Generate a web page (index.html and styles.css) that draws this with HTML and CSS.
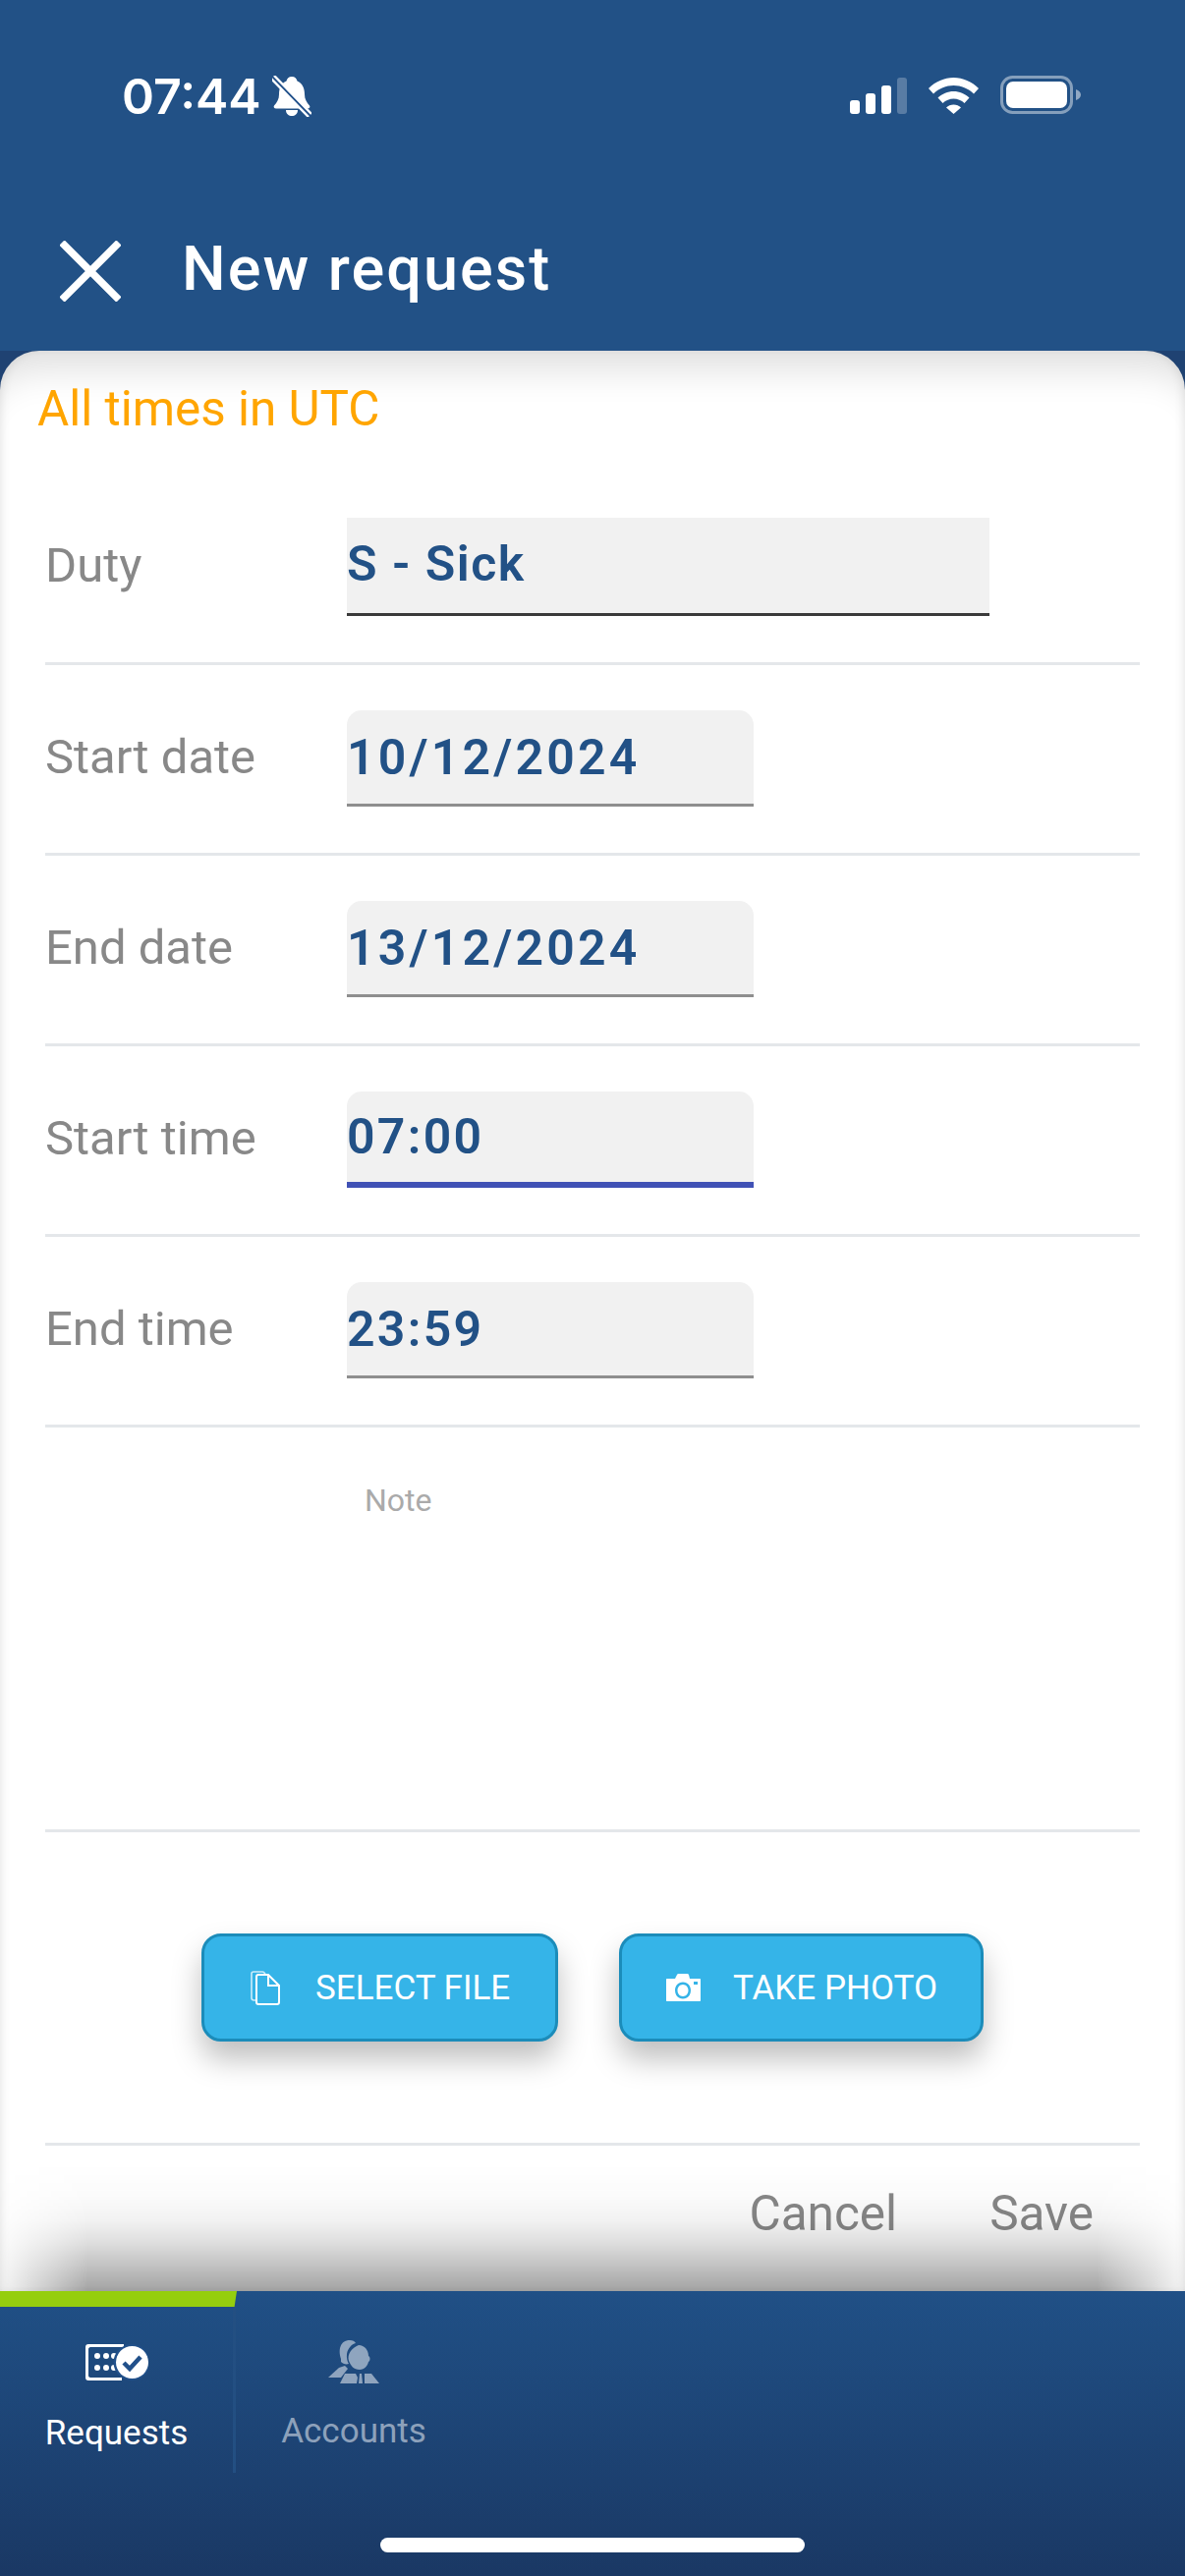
FILE: index.html
```html
<!DOCTYPE html>
<html lang="en">
<head>
<meta charset="utf-8">
<title>New request</title>
<link rel="stylesheet" href="styles.css">
</head>
<body>
<div class="app">
  <header class="top">
    <div class="status">
      <div class="status-left">
        <span class="clock">07:44</span>
        <svg class="bell" viewBox="0 0 40 42"><path fill="#fff" d="M20 1c3 0 5 2 5.500 4.500C31 8 33 13 33 19c0 5 2 8 5 11.500 1 1.500 0 3-2 3H4c-2 0-3-1.500-2-3C5 27 7 24 7 19 7 13 9 8 14.500 5.500 15 3 17 1 20 1z"/><path fill="#fff" d="M14 35h12c0 4-3 6-6 6s-6-2-6-6z"/><path stroke="#21508a" stroke-width="5" d="M0 1l40 41"/><path stroke="#fff" stroke-width="2.500" d="M2 0l38 39M-1 3l38 39"/></svg>
      </div>
      <div class="status-right">
        <svg class="signal" viewBox="0 0 58 37"><rect y="23" width="10" height="14" rx="3" fill="#fff"/><rect x="16" y="16" width="10" height="21" rx="3" fill="#fff"/><rect x="32" y="8" width="10" height="29" rx="3" fill="#fff"/><rect x="48" width="10" height="37" rx="3" fill="#fff" opacity=".25"/></svg>
        <svg class="wifi" viewBox="0 0 51 37"><path fill="#fff" d="M25.500 0C35 0 44 4 51 11l-5 5.500C40.500 11 33 8 25.500 8S10.500 11 5 16.500L0 11C7 4 16 0 25.500 0z"/><path fill="#fff" d="M25.500 14c6 0 11.500 2.500 16 6.500l-5 5.500c-3-3-7-4.500-11-4.500s-8 1.500-11 4.500l-5-5.500c4.500-4 10-6.500 16-6.500z"/><path fill="#fff" d="M25.500 27.500c3 0 5.500 1 7.500 3L25.500 37 18 30.500c2-2 4.500-3 7.500-3z"/></svg>
        <svg class="battery" viewBox="0 0 82 39"><rect x="1.500" y="1.500" width="71" height="36" rx="11" fill="none" stroke="#fff" stroke-opacity=".45" stroke-width="3"/><rect x="6" y="6" width="62" height="27" rx="7" fill="#fff"/><path d="M77 14c3 1 5 3 5 5.500S80 24 77 25z" fill="#fff" fill-opacity=".5"/></svg>
      </div>
    </div>
    <div class="titlebar">
      <svg class="close" viewBox="0 0 62 62"><path d="M2 2l58 58M60 2L2 60" stroke="#fff" stroke-width="7.500" fill="none"/></svg>
      <h1 class="title">New request</h1>
    </div>
  </header>

  <main class="sheet">
    <p class="notice">All times in UTC</p>
    <div class="row row-duty">
      <span class="label">Duty</span>
      <div class="field field-wide"><span class="value value-duty">S - Sick</span></div>
    </div>
    <div class="row">
      <span class="label">Start date</span>
      <div class="field"><span class="value value-date">10/12/2024</span></div>
    </div>
    <div class="row">
      <span class="label">End date</span>
      <div class="field"><span class="value value-date">13/12/2024</span></div>
    </div>
    <div class="row">
      <span class="label">Start time</span>
      <div class="field field-active"><span class="value">07:00</span></div>
    </div>
    <div class="row">
      <span class="label">End time</span>
      <div class="field"><span class="value">23:59</span></div>
    </div>
    <div class="row-note"><span class="note-label">Note</span></div>
    <div class="row-buttons">
      <button class="btn btn-file">
        <svg class="btn-icon" viewBox="0 0 30 35"><path d="M6 30H3.500C2 30 1 29 1 27.500V3C1 2 2 1 3 1h9c1.500 0 2.500.8 3 3" fill="none" stroke="#fff" stroke-width="1.600" opacity=".75"/><path d="M6 6c0-1 1-2 2-2h10l11 11v17c0 1.500-1 2-2 2H8c-1 0-2-.5-2-2z" fill="none" stroke="#fff" stroke-width="2"/><path d="M18 4v11h11" fill="none" stroke="#fff" stroke-width="2"/></svg>
        <span>SELECT FILE</span>
      </button>
      <button class="btn btn-photo">
        <svg class="btn-icon" viewBox="0 0 35 28"><path fill="#fff" fill-rule="evenodd" d="M1 5h8l2-4c.3-.6.8-1 1.500-1h9c.7 0 1.200.4 1.500 1l1 4h10c.6 0 1 .4 1 1v21c0 .6-.4 1-1 1H1c-.6 0-1-.4-1-1V6c0-.6.4-1 1-1zm16 3.500c-5 0-8 4-8 8.500s3 8.500 8 8.500 8-4 8-8.500-3-8.500-8-8.500zm0 2.500c3.300 0 5.500 2.800 5.500 6s-2.200 6-5.500 6-5.500-2.800-5.500-6 2.200-6 5.500-6zM28 8v3h4V8z"/></svg>
        <span>TAKE PHOTO</span>
      </button>
    </div>
    <div class="actions">
      <span class="action">Cancel</span>
      <span class="action">Save</span>
    </div>
  </main>

  <nav class="tabs">
    <div class="tab tab-active">
      <svg class="tab-icon-req" viewBox="0 0 64 37"><path fill="#fff" d="M3 0h36v3H5c-1 0-2 1-2 2v27c0 1 1 2 2 2h32v3H3c-2 0-3-1-3-3V3c0-2 1-3 3-3z"/><g fill="#fff"><circle cx="12" cy="12" r="3"/><circle cx="21" cy="12" r="3"/><circle cx="29" cy="12" r="3"/><circle cx="12" cy="24" r="3"/><circle cx="21" cy="24" r="3"/><circle cx="29" cy="24" r="3"/></g><circle cx="47" cy="18.500" r="18.500" fill="#21508a"/><circle cx="47.500" cy="18.500" r="16.500" fill="#fff"/><path d="M39 19l6 6 11-12" fill="none" stroke="#21508a" stroke-width="4.500"/></svg>
      <span class="tab-label">Requests</span>
    </div>
    <div class="tab tab-muted">
      <svg class="tab-icon-acc" viewBox="0 0 52 44"><g fill="#fff" fill-opacity=".5"><path d="M13 19C10 10 12 0 22 0c3 0 5 1 6 3-4 1-8 5-9 11-.5 4 .5 8 2 10-3 1-6 0-8-2z"/><path d="M11 28l6-2 3 3-7 9H0z"/><path d="M31 5c6 0 10 5 10 11 2 1 2 5 0 6-1 4-4 8-9 8-6 0-9-4-11-9-2-7 3-13 10-16z"/><path d="M12 44l5-10h11l2 4-1 6z"/><path d="M31 44l1-10h2l1 10z"/><path d="M37 34h7l8 10H37z"/></g></svg>
      <span class="tab-label">Accounts</span>
    </div>
    <div class="home-indicator"></div>
  </nav>
</div>
</body>
</html>
```
FILE: styles.css
```css
* { box-sizing: border-box; }
html, body { margin: 0; padding: 0; }
body { font-family: Roboto, "Liberation Sans", sans-serif; background: #1f4272; }
.app { width: 1206px; height: 2622px; display: flex; flex-direction: column; overflow: hidden; background: #1f4272; }

.top { height: 357px; flex: none; background: #225186; display: flex; flex-direction: column; }
.status { height: 195px; flex: none; padding: 77px 106px 0 124px; display: flex; justify-content: space-between; align-items: flex-start; }
.status-left { display: flex; align-items: center; gap: 11px; }
.clock { font-family: Inter, Roboto, sans-serif; font-weight: 600; font-size: 50px; line-height: 41px; color: #fff; }
.bell { width: 40px; height: 42px; }
.status-right { display: flex; align-items: center; }
.signal { width: 58px; height: 37px; margin-top: 2px; }
.wifi { width: 51px; height: 37px; margin: 2px 0 0 22px; }
.battery { width: 82px; height: 39px; margin-left: 22px; }

.titlebar { display: flex; align-items: center; padding: 0 0 0 61px; height: 162px; }
.close { width: 62px; height: 62px; flex: none; }
.title { margin: 0 0 6px 62px; font-size: 63px; font-weight: 500; letter-spacing: 2px; color: #fff; }

.sheet { flex: 1; min-height: 0; background: #fff; border-radius: 40px 40px 0 0; display: flex; flex-direction: column; position: relative;
  box-shadow: inset 0 50px 36px -30px rgba(0,0,0,.12), inset 6px 0 12px -6px rgba(0,0,0,.12), inset -6px 0 12px -6px rgba(0,0,0,.12); }
.sheet::after { content: ""; position: absolute; left: 0; right: 0; bottom: 0; height: 130px; pointer-events: none;
  background: linear-gradient(rgba(0,0,0,0), rgba(0,0,0,.015) 25%, rgba(0,0,0,.05) 45%, rgba(0,0,0,.13) 62%, rgba(0,0,0,.25) 82%, rgba(0,0,0,.36));
  -webkit-mask-image: linear-gradient(90deg, rgba(0,0,0,.1), #000 90px, #000 1116px, rgba(0,0,0,.1));
  mask-image: linear-gradient(90deg, rgba(0,0,0,.1), #000 90px, #000 1116px, rgba(0,0,0,.1)); }
.notice { margin: 0; height: 126px; padding: 29px 0 0 38px; font-size: 49.400px; line-height: 60px; color: #ffa500; }

.row { height: 194px; margin: 0 46px; flex: none; display: flex; align-items: center; border-bottom: 3px solid #e4e7ea; padding-bottom: 1px; }
.row-duty { padding-bottom: 3px; }
.label { width: 307px; flex: none; font-size: 49px; color: #888; padding-bottom: 3px; }
.field { width: 414px; height: 98px; background: #f1f1f1; border-radius: 15px 15px 0 0; border-bottom: 3px solid #8e8e8e; display: flex; align-items: center; }
.field-wide { width: 654px; height: 100px; border-radius: 0; border-bottom-color: #3a3a3a; }
.field-active { border-bottom: 6px solid #4051b5; }
.value { font-size: 50px; font-weight: 600; letter-spacing: 2.300px; color: #225186; line-height: 1; }
.value-date { letter-spacing: 3.200px; }
.value-duty { letter-spacing: 1.500px; margin-bottom: 3px; }

.row-note { height: 412px; margin: 0 46px; flex: none; padding: 55px 0 0 325px; border-bottom: 3px solid #e4e7ea; }
.note-label { font-size: 32px; line-height: 38px; color: #aaa; display: block; }

.row-buttons { height: 319px; margin: 0 46px; flex: none; display: flex; justify-content: center; align-items: center; gap: 62px; border-bottom: 3px solid #e4e7ea; }
.btn { height: 110px; padding: 0; background: #35b4e8; border: 3px solid #1b8cba; border-radius: 20px; color: #fff; font-family: Roboto, sans-serif; font-size: 35px; display: flex; align-items: center; box-shadow: 0 18px 30px rgba(0,0,0,.25); }
.btn-file { width: 363px; padding-left: 47px; gap: 36px; }
.btn-photo { width: 371px; padding-left: 45px; gap: 33px; }
.btn-file .btn-icon { width: 30px; height: 35px; }
.btn-photo .btn-icon { width: 35px; height: 28px; }

.actions { flex: 1; display: flex; justify-content: flex-end; gap: 94px; padding: 39px 93px 0 0; }
.action { font-size: 49.500px; line-height: 60px; color: #888; }

.tabs { height: 290px; flex: none; background: linear-gradient(#205086, #1a3864); display: flex; align-items: flex-start; position: relative; }
.tab { width: 240px; height: 185px; display: flex; flex-direction: column; align-items: center; }
.tab-active { position: relative; border-right: 3px solid #234f82; }
.tab-active::before { content: ""; position: absolute; left: 0; top: 0; width: 241px; height: 16px; background: #95ce0d; clip-path: polygon(0 0, 100% 0, 99% 100%, 0 100%); }
.tab-icon-req { width: 64px; height: 37px; margin-top: 54px; }
.tab-icon-acc { width: 52px; height: 44px; margin-top: 50px; }
.tab-label { font-size: 35px; line-height: 40px; color: #fff; }
.tab-active .tab-label { margin-top: 34px; }
.tab-muted .tab-label { margin-top: 29px; color: #8da1bb; }
.home-indicator { position: absolute; left: 387px; top: 251px; width: 432px; height: 15px; border-radius: 8px; background: #fff; }
```
